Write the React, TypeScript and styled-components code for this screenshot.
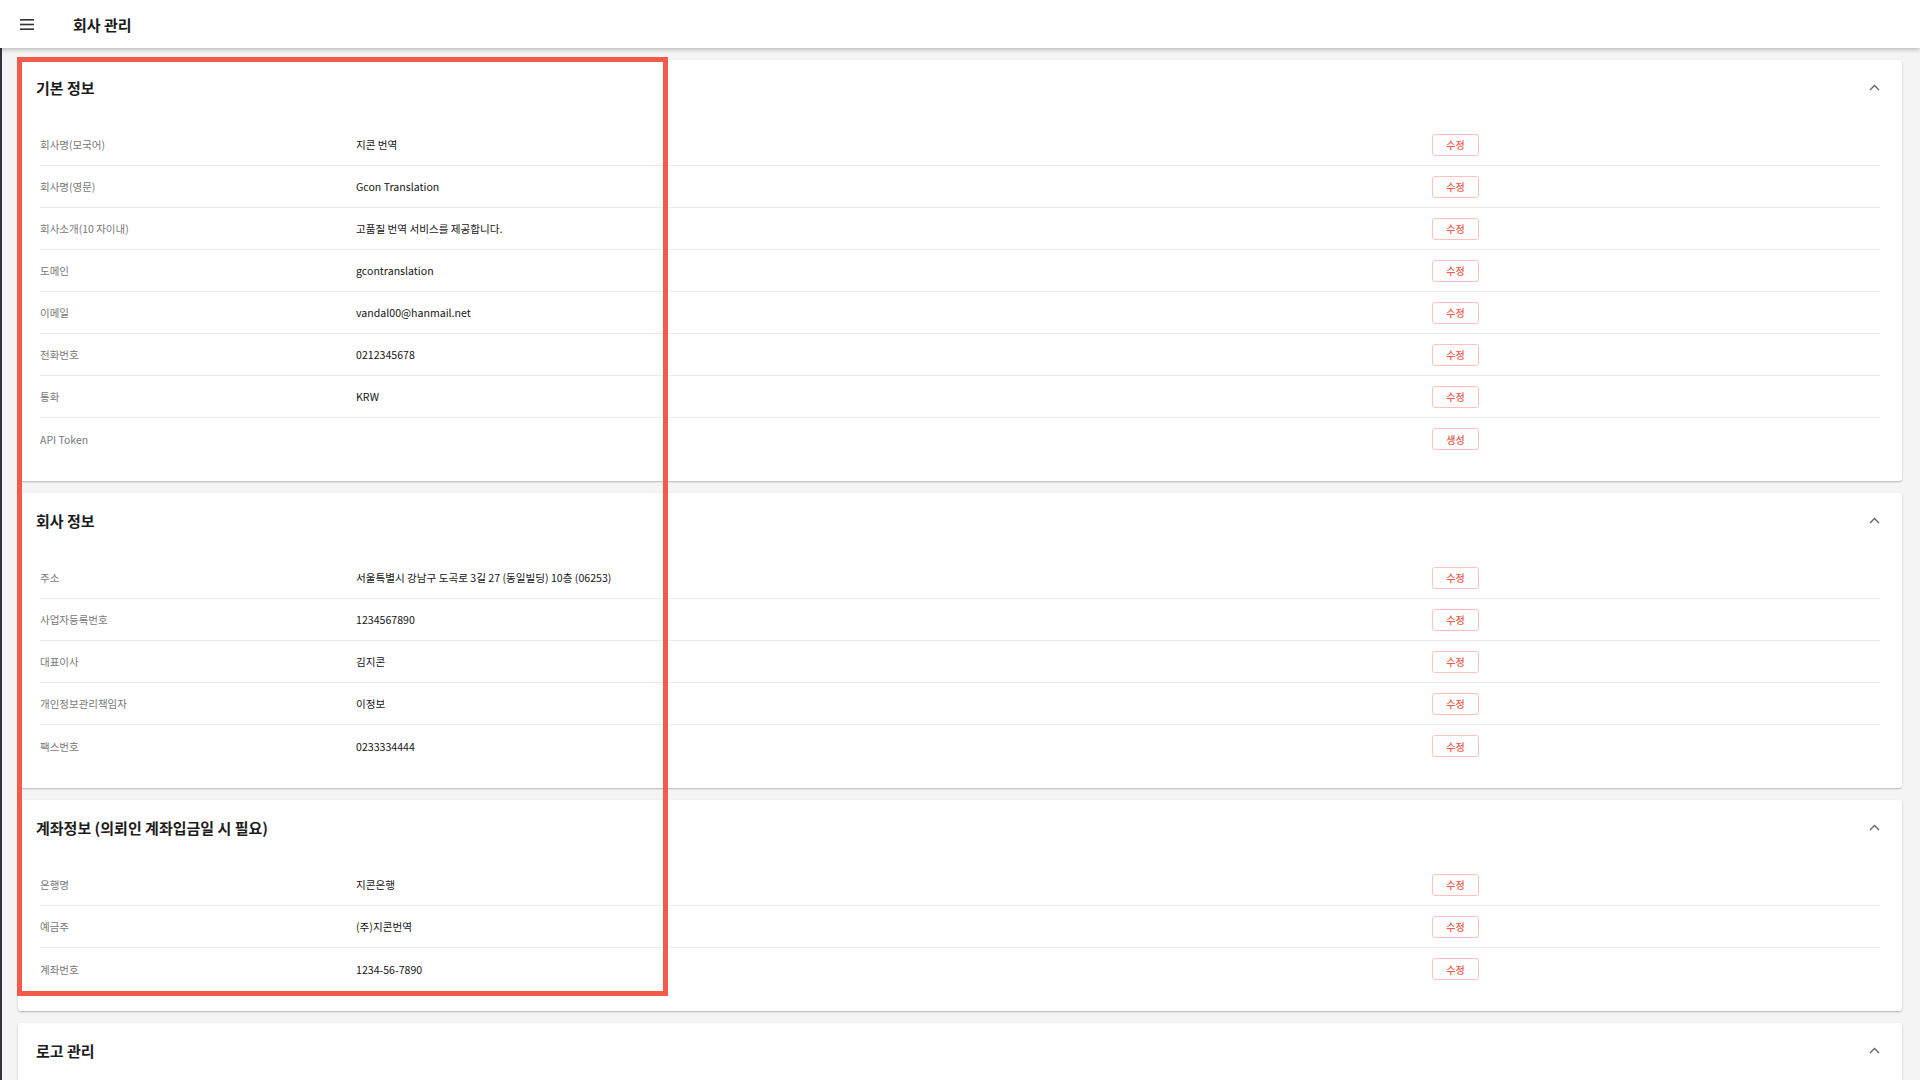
import React from "react";
import styled, { createGlobalStyle } from "styled-components";

const GlobalStyle = createGlobalStyle`
  html, body {
    margin: 0;
    padding: 0;
    background: #f4f4f4;
    font-family: "Noto Sans CJK KR", "Noto Sans", sans-serif;
  }
  * { box-sizing: border-box; }
`;

const Page = styled.div`
  position: relative;
  min-height: 100vh;
  background: #f4f4f4;
`;

const TopBar = styled.header`
  position: relative;
  z-index: 2;
  height: 48px;
  background: #ffffff;
  display: flex;
  align-items: center;
  padding-left: 20px;
  box-shadow: 0 2px 4px rgba(0, 0, 0, 0.22);
`;

const MenuButton = styled.button`
  display: flex;
  align-items: center;
  justify-content: center;
  width: 14px;
  height: 14px;
  padding: 0;
  border: none;
  background: transparent;
  margin-right: 39px;
  cursor: pointer;
`;

const PageTitle = styled.h1`
  margin: 0;
  font-size: 15px;
  font-weight: 700;
  color: #1a1a1a;
`;

const Main = styled.main`
  display: flex;
  flex-direction: column;
  gap: 12px;
  padding: 12px 18px 12px 16px;
  border-left: 2px solid #2f3540;
`;

const Card = styled.section`
  background: #ffffff;
  border-radius: 3px;
  box-shadow: 0 1px 2px rgba(0, 0, 0, 0.25);
  padding: 0 22px 21px 18px;
`;

const CardHeader = styled.div`
  height: 54px;
  display: flex;
  align-items: center;
  justify-content: space-between;
`;

const CardTitle = styled.h2`
  margin: 0;
  font-size: 15px;
  font-weight: 700;
  color: #1c1c1c;
`;

const Rows = styled.div`
  padding-top: 10px;
  margin-left: 4px;
`;

const Row = styled.div`
  display: grid;
  grid-template-columns: 316px 1076px 47px;
  align-items: center;
  height: 42px;
  border-bottom: 1px solid #ebebeb;
  &:last-child {
    border-bottom: none;
  }
`;

const Label = styled.div`
  font-size: 10.5px;
  color: #787878;
`;

const Value = styled.div`
  font-size: 10.6px;
  color: #151515;
`;

const ActionButton = styled.button`
  width: 47px;
  height: 22px;
  padding: 0;
  border: 1px solid #ffc3bc;
  border-radius: 3px;
  background: #ffffff;
  color: #f0584a;
  font-family: "Noto Sans CJK KR", sans-serif;
  font-size: 10px;
  font-weight: 500;
  cursor: pointer;
`;

const Chevron = styled.svg`
  width: 11px;
  height: 7px;
`;

const LogoBody = styled.div`
  height: 120px;
`;

const Highlight = styled.div`
  position: absolute;
  left: 17px;
  top: 57px;
  width: 651px;
  height: 939px;
  border: 5px solid #f25a4a;
  pointer-events: none;
  z-index: 3;
`;

type Item = { label: string; value: string; action: string };

const basic: Item[] = [
  { label: "회사명(모국어)", value: "지콘 번역", action: "수정" },
  { label: "회사명(영문)", value: "Gcon Translation", action: "수정" },
  { label: "회사소개(10 자이내)", value: "고품질 번역 서비스를 제공합니다.", action: "수정" },
  { label: "도메인", value: "gcontranslation", action: "수정" },
  { label: "이메일", value: "vandal00@hanmail.net", action: "수정" },
  { label: "전화번호", value: "0212345678", action: "수정" },
  { label: "통화", value: "KRW", action: "수정" },
  { label: "API Token", value: "", action: "생성" },
];

const company: Item[] = [
  { label: "주소", value: "서울특별시 강남구 도곡로 3길 27 (동일빌딩) 10층 (06253)", action: "수정" },
  { label: "사업자등록번호", value: "1234567890", action: "수정" },
  { label: "대표이사", value: "김지콘", action: "수정" },
  { label: "개인정보관리책임자", value: "이정보", action: "수정" },
  { label: "팩스번호", value: "0233334444", action: "수정" },
];

const account: Item[] = [
  { label: "은행명", value: "지콘은행", action: "수정" },
  { label: "예금주", value: "(주)지콘번역", action: "수정" },
  { label: "계좌번호", value: "1234-56-7890", action: "수정" },
];

const ChevronUp = () => (
  <Chevron viewBox="0 0 11 7" fill="none">
    <path d="M1 6 L5.5 1.5 L10 6" stroke="#666" strokeWidth="1.4" />
  </Chevron>
);

const Section = ({ title, items }: { title: string; items: Item[] }) => (
  <Card>
    <CardHeader>
      <CardTitle>{title}</CardTitle>
      <ChevronUp />
    </CardHeader>
    <Rows>
      {items.map((it) => (
        <Row key={it.label}>
          <Label>{it.label}</Label>
          <Value>{it.value}</Value>
          <ActionButton>{it.action}</ActionButton>
        </Row>
      ))}
    </Rows>
  </Card>
);

export default function App() {
  return (
    <Page>
      <GlobalStyle />
      <TopBar>
        <MenuButton aria-label="menu">
          <svg width="14" height="11" viewBox="0 0 14 11">
            <rect x="0" y="0" width="14" height="1.6" fill="#333" />
            <rect x="0" y="4.7" width="14" height="1.6" fill="#333" />
            <rect x="0" y="9.4" width="14" height="1.6" fill="#333" />
          </svg>
        </MenuButton>
        <PageTitle>회사 관리</PageTitle>
      </TopBar>
      <Main>
        <Section title="기본 정보" items={basic} />
        <Section title="회사 정보" items={company} />
        <Section title="계좌정보 (의뢰인 계좌입금일 시 필요)" items={account} />
        <Card>
          <CardHeader>
            <CardTitle>로고 관리</CardTitle>
            <ChevronUp />
          </CardHeader>
          <LogoBody />
        </Card>
      </Main>
      <Highlight />
    </Page>
  );
}
